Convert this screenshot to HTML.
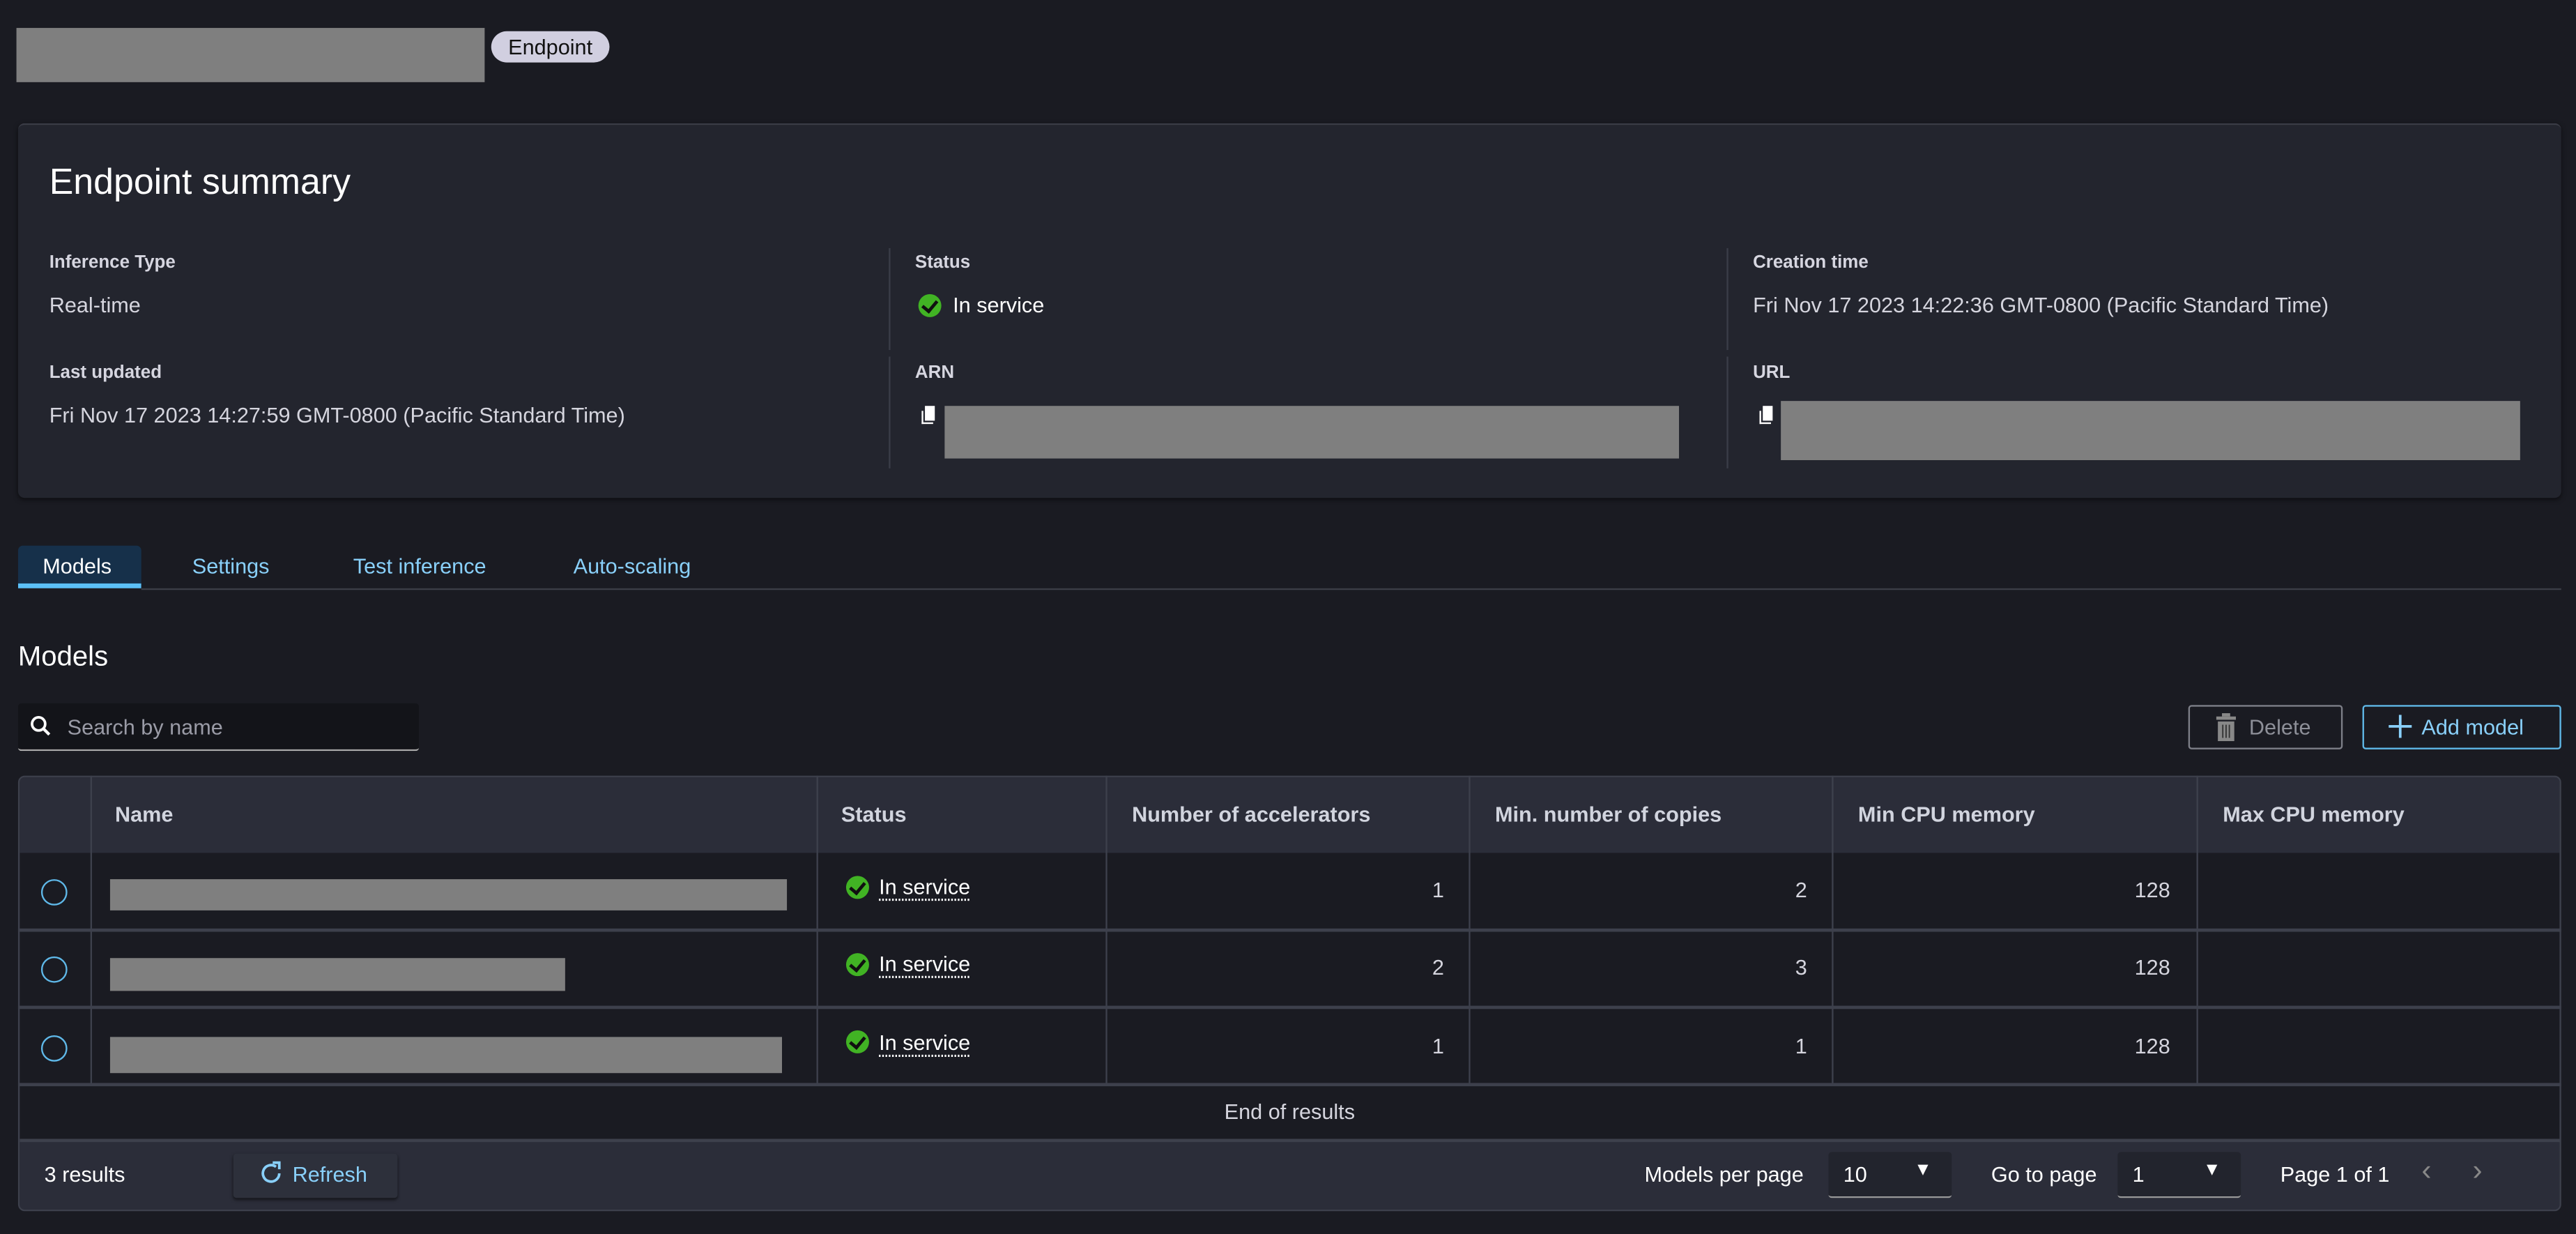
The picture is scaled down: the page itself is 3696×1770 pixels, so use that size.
<!DOCTYPE html>
<html><head><meta charset="utf-8"><style>
*{margin:0;padding:0;box-sizing:border-box}
html,body{width:3696px;height:1770px;overflow:hidden;background:#1a1b22}
#r{position:absolute;left:0;top:0;width:1568px;height:751px;transform:scale(2.357143);transform-origin:0 0;font-family:"Liberation Sans",sans-serif;color:#d5d5de;font-size:13px}
.a{position:absolute;white-space:nowrap}
.g{position:absolute;background:#7f7f7f}
.lbl{font-size:11px;font-weight:bold;color:#d6d6e0}
.vd{position:absolute;width:1px;background:#3a3d48}
.th{position:absolute;top:488px;font-weight:bold;font-size:13px;color:#d1d4de}
.cd{position:absolute;width:1px;background:#3d404c}
.hl{position:absolute;left:11px;width:1548px;height:2px;background:#3d404c}
.rad{position:absolute;left:25px;width:16px;height:16px;border:1.3px solid #5fb8e8;border-radius:50%}
.ok{position:absolute;width:14px;height:14px;border-radius:50%;background:#41b324}
.ok:after{content:"";position:absolute;left:4px;top:2px;width:4px;height:7px;border:solid #101010;border-width:0 2px 2px 0;transform:rotate(40deg)}
.is{text-decoration:underline dotted;text-underline-offset:3px}
.num{position:absolute;text-align:right}
</style></head><body><div id="r">
<div class="g" style="left:10px;top:17px;width:285px;height:33px"></div>
<div class="a" style="left:299px;top:19px;width:72px;height:19px;border-radius:10px;background:#d1cfe0;color:#111;font-size:13px;line-height:19px;text-align:center">Endpoint</div>

<div class="a" style="left:11px;top:75px;width:1548px;height:228px;background:#23252e;border-radius:4px;box-shadow:0 1px 3px #0008;border-top:1px solid #3a3c46"></div>
<div class="a" style="left:30px;top:98px;font-size:22px;color:#fff">Endpoint summary</div>
<div class="vd" style="left:541px;top:151px;height:62px"></div>
<div class="vd" style="left:1051px;top:151px;height:62px"></div>
<div class="vd" style="left:541px;top:217px;height:68px"></div>
<div class="vd" style="left:1051px;top:217px;height:68px"></div>
<div class="a lbl" style="left:30px;top:154px">Inference Type</div>
<div class="a" style="left:30px;top:178px">Real-time</div>
<div class="a lbl" style="left:557px;top:154px">Status</div>
<div class="ok" style="left:559px;top:179px"></div>
<div class="a" style="left:580px;top:178px;color:#fff">In service</div>
<div class="a lbl" style="left:1067px;top:154px">Creation time</div>
<div class="a" style="left:1067px;top:178px">Fri Nov 17 2023 14:22:36 GMT-0800 (Pacific Standard Time)</div>
<div class="a lbl" style="left:30px;top:221px">Last updated</div>
<div class="a" style="left:30px;top:245px">Fri Nov 17 2023 14:27:59 GMT-0800 (Pacific Standard Time)</div>
<div class="a lbl" style="left:557px;top:221px">ARN</div>
<div class="a lbl" style="left:1067px;top:221px">URL</div>
<div class="a" style="left:561px;top:250px;width:7px;height:8px;border-left:1.5px solid #fff;border-bottom:1.5px solid #fff"></div>
<div class="a" style="left:563px;top:247px;width:6px;height:9px;background:#fff"></div>
<div class="g" style="left:575px;top:247px;width:447px;height:32px"></div>
<div class="a" style="left:1071px;top:250px;width:7px;height:8px;border-left:1.5px solid #fff;border-bottom:1.5px solid #fff"></div>
<div class="a" style="left:1073px;top:247px;width:6px;height:9px;background:#fff"></div>
<div class="g" style="left:1084px;top:244px;width:450px;height:36px"></div>

<div class="a" style="left:11px;top:332px;width:75px;height:26px;background:#16304a;border-radius:3px 3px 0 0;border-bottom:3px solid #5bc0f8"></div>
<div class="a" style="left:26px;top:337px;color:#fff">Models</div>
<div class="a" style="left:117px;top:337px;color:#89d0fa">Settings</div>
<div class="a" style="left:215px;top:337px;color:#89d0fa">Test inference</div>
<div class="a" style="left:349px;top:337px;color:#89d0fa">Auto-scaling</div>
<div class="a" style="left:86px;top:358px;width:1473px;height:1px;background:#3b3d46"></div>

<div class="a" style="left:11px;top:390px;font-size:17px;color:#fff">Models</div>
<div class="a" style="left:11px;top:428px;width:244px;height:29px;background:#131419;border-radius:2px;border-bottom:1px solid #aaa"></div>
<svg class="a" style="left:18px;top:435px" width="14" height="14" viewBox="0 0 14 14"><circle cx="5.5" cy="5.5" r="4" fill="none" stroke="#fff" stroke-width="1.6"/><path d="M8.5 8.5L12 12" stroke="#fff" stroke-width="1.8"/></svg>
<div class="a" style="left:41px;top:435px;color:#9a9ba6">Search by name</div>

<div class="a" style="left:1332px;top:429px;width:94px;height:27px;border:1px solid #7d7f88;border-radius:2px"></div>
<svg class="a" style="left:1349px;top:434px" width="12" height="17" viewBox="0 0 12 17"><rect x="3.5" y="0" width="5" height="2" fill="#888"/><rect x="0" y="2" width="12" height="2" fill="#888"/><rect x="1" y="5" width="10" height="12" fill="#888"/><path d="M4 7v8M6 7v8M8 7v8" stroke="#333" stroke-width="0.8"/></svg>
<div class="a" style="left:1369px;top:435px;color:#8d8f98">Delete</div>
<div class="a" style="left:1438px;top:429px;width:121px;height:27px;border:1px solid #5fb8e8;border-radius:2px"></div>
<svg class="a" style="left:1453px;top:434px" width="16" height="16" viewBox="0 0 16 16"><path d="M8 1v14M1 8h14" stroke="#89d0fa" stroke-width="1.6"/></svg>
<div class="a" style="left:1474px;top:435px;color:#89d0fa">Add model</div>

<div class="a" style="left:11px;top:472px;width:1548px;height:265px;border:1px solid #3d404c;border-radius:4px;background:#1a1b22;overflow:hidden">
 <div class="a" style="left:0;top:0;width:1548px;height:46px;background:#2b2d39"></div>
 <div class="a" style="left:0;top:220px;width:1548px;height:45px;background:#2b2d39;border-top:2px solid #3d404c"></div>
</div>
<div class="cd" style="left:55px;top:472px;height:188px"></div>
<div class="cd" style="left:497px;top:472px;height:188px"></div>
<div class="cd" style="left:673px;top:472px;height:188px"></div>
<div class="cd" style="left:894px;top:472px;height:188px"></div>
<div class="cd" style="left:1115px;top:472px;height:188px"></div>
<div class="cd" style="left:1337px;top:472px;height:188px"></div>
<div class="hl" style="top:565px"></div>
<div class="hl" style="top:612px"></div>
<div class="hl" style="top:659px"></div>

<div class="th" style="left:70px">Name</div>
<div class="th" style="left:512px">Status</div>
<div class="th" style="left:689px">Number of accelerators</div>
<div class="th" style="left:910px">Min. number of copies</div>
<div class="th" style="left:1131px">Min CPU memory</div>
<div class="th" style="left:1353px">Max CPU memory</div>

<div class="rad" style="top:535px"></div>
<div class="rad" style="top:582px"></div>
<div class="rad" style="top:630px"></div>
<div class="g" style="left:67px;top:535px;width:412px;height:19px"></div>
<div class="g" style="left:67px;top:583px;width:277px;height:20px"></div>
<div class="g" style="left:67px;top:631px;width:409px;height:22px"></div>

<div class="ok" style="left:515px;top:533px"></div><div class="a is" style="left:535px;top:532px;color:#fff">In service</div>
<div class="ok" style="left:515px;top:580px"></div><div class="a is" style="left:535px;top:579px;color:#fff">In service</div>
<div class="ok" style="left:515px;top:627px"></div><div class="a is" style="left:535px;top:627px;color:#fff">In service</div>

<div class="num" style="left:780px;width:99px;top:534px">1</div>
<div class="num" style="left:780px;width:99px;top:581px">2</div>
<div class="num" style="left:780px;width:99px;top:629px">1</div>
<div class="num" style="left:1000px;width:100px;top:534px">2</div>
<div class="num" style="left:1000px;width:100px;top:581px">3</div>
<div class="num" style="left:1000px;width:100px;top:629px">1</div>
<div class="num" style="left:1221px;width:100px;top:534px">128</div>
<div class="num" style="left:1221px;width:100px;top:581px">128</div>
<div class="num" style="left:1221px;width:100px;top:629px">128</div>

<div class="a" style="left:11px;width:1548px;top:669px;text-align:center">End of results</div>

<div class="a" style="left:27px;top:707px;color:#fff">3 results</div>
<div class="a" style="left:142px;top:702px;width:100px;height:27px;background:#2d303b;border-radius:2px;box-shadow:0 1px 2px #0009"></div>
<svg class="a" style="left:157px;top:706px" width="16" height="16" viewBox="0 0 16 16"><path d="M13 8a5 5 0 1 1-2-4" fill="none" stroke="#89d0fa" stroke-width="1.6"/><path d="M9 1.5h4v4" fill="none" stroke="#89d0fa" stroke-width="1.6"/></svg>
<div class="a" style="left:178px;top:707px;color:#89d0fa">Refresh</div>
<div class="a" style="left:1001px;top:707px;color:#fff">Models per page</div>
<div class="a" style="left:1113px;top:701px;width:75px;height:28px;background:#22242d;border-radius:2px;border-bottom:1px solid #999"></div>
<div class="a" style="left:1122px;top:707px;color:#fff">10</div>
<div class="a" style="left:1165px;top:706px;color:#fff;font-size:11px">▼</div>
<div class="a" style="left:1212px;top:707px;color:#fff">Go to page</div>
<div class="a" style="left:1289px;top:701px;width:75px;height:28px;background:#22242d;border-radius:2px;border-bottom:1px solid #999"></div>
<div class="a" style="left:1298px;top:707px;color:#fff">1</div>
<div class="a" style="left:1341px;top:706px;color:#fff;font-size:11px">▼</div>
<div class="a" style="left:1388px;top:707px;color:#fff">Page 1 of 1</div>
<div class="a" style="left:1474px;top:702px;color:#888;font-size:18px">‹</div>
<div class="a" style="left:1505px;top:702px;color:#888;font-size:18px">›</div>
</div></body></html>
